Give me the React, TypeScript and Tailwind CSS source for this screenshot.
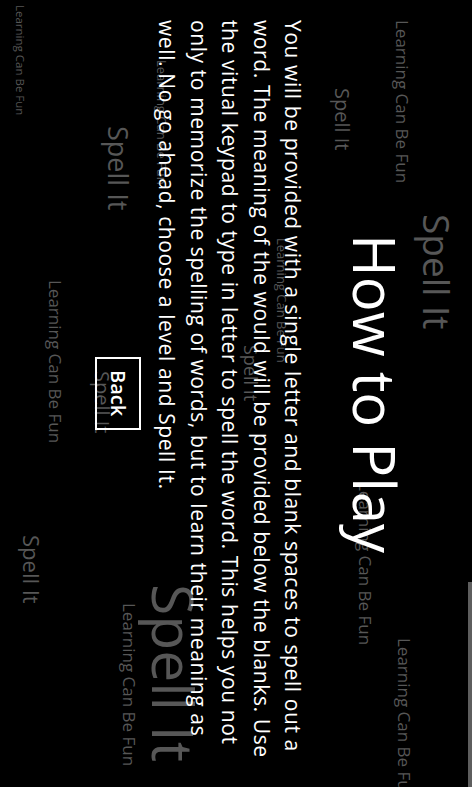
const FONT = "font-['Open_Sans','Noto_Sans',sans-serif]";

type Mark = { text: string; className: string };

// faint background words, placed on the canvas like the original watermark
const MARKS: Mark[] = [
  { text: "Learning Can Be Fun", className: "left-[14px] top-[5px] text-[11.5px] text-[#4a4a4a]" },
  { text: "Learning Can Be Fun", className: "left-[394px] top-[20px] text-[17px]" },
  { text: "Spell It", className: "left-[332px] top-[88px] text-[20px]" },
  { text: "Spell It", className: "left-[105px] top-[126px] text-[27px]" },
  { text: "Spell It", className: "left-[419px] top-[214px] text-[37px]" },
  { text: "Learning Can Be Fun", className: "left-[275px] top-[238px] text-[13px]" },
  { text: "Learning Can Be Fun", className: "left-[155px] top-[60px] text-[13px]" },
  { text: "Spell It", className: "left-[242px] top-[345px] text-[18px]" },
  { text: "Spell It", className: "left-[92px] top-[371px] text-[20px]" },
  { text: "Learning Can Be Fun", className: "left-[47px] top-[280px] text-[17px]" },
  { text: "Learning Can Be Fun", className: "left-[357px] top-[482px] text-[17px]" },
  { text: "Learning Can Be Fun", className: "left-[396px] top-[638px] text-[17px]" },
  { text: "Spell It", className: "left-[145px] top-[584px] text-[57px]" },
  { text: "Learning Can Be Fun", className: "left-[121px] top-[603px] text-[17px]" },
  { text: "Spell It", className: "left-[21px] top-[535px] text-[22px]" },
];

const LINES = [
  "You will be provided with a single letter and blank spaces to spell out a",
  "word. The meaning of the would will be provided below the blanks. Use",
  "the vitual keypad to type in letter to spell the word. This helps you not",
  "only to memorize the spelling of words, but to learn their meaning as",
  "well. No go ahead, choose a level and Spell It.",
];

const App = () => {
  return (
    <div
      className={`relative h-[787px] w-[472px] overflow-hidden bg-black [writing-mode:vertical-rl] ${FONT}`}
    >
      {MARKS.map((mark, index) => (
        <span
          key={index}
          className={`absolute whitespace-nowrap leading-none text-[#575757] ${mark.className}`}
        >
          {mark.text}
        </span>
      ))}

      <div className="absolute right-0 top-[582px] h-[205px] w-[4px] bg-[#5e5e5e]" />

      <div className="relative flex h-full flex-col pr-[62px]">
        <h1 className="text-center text-[58px] font-normal leading-[70px] text-white">
          How to Play
        </h1>
        <div className="mr-[32px] pt-[20px] text-[21px] leading-[31.5px] tracking-[0.6px] text-white">
          {LINES.map((line) => (
            <span key={line} className="block whitespace-nowrap">
              {line}
            </span>
          ))}
        </div>
        <button
          type="button"
          className="mr-[10px] flex h-[73px] w-[46px] items-center justify-center self-center border-2 border-white text-[20px] font-semibold text-white"
        >
          Back
        </button>
      </div>
    </div>
  );
};

export default App;
